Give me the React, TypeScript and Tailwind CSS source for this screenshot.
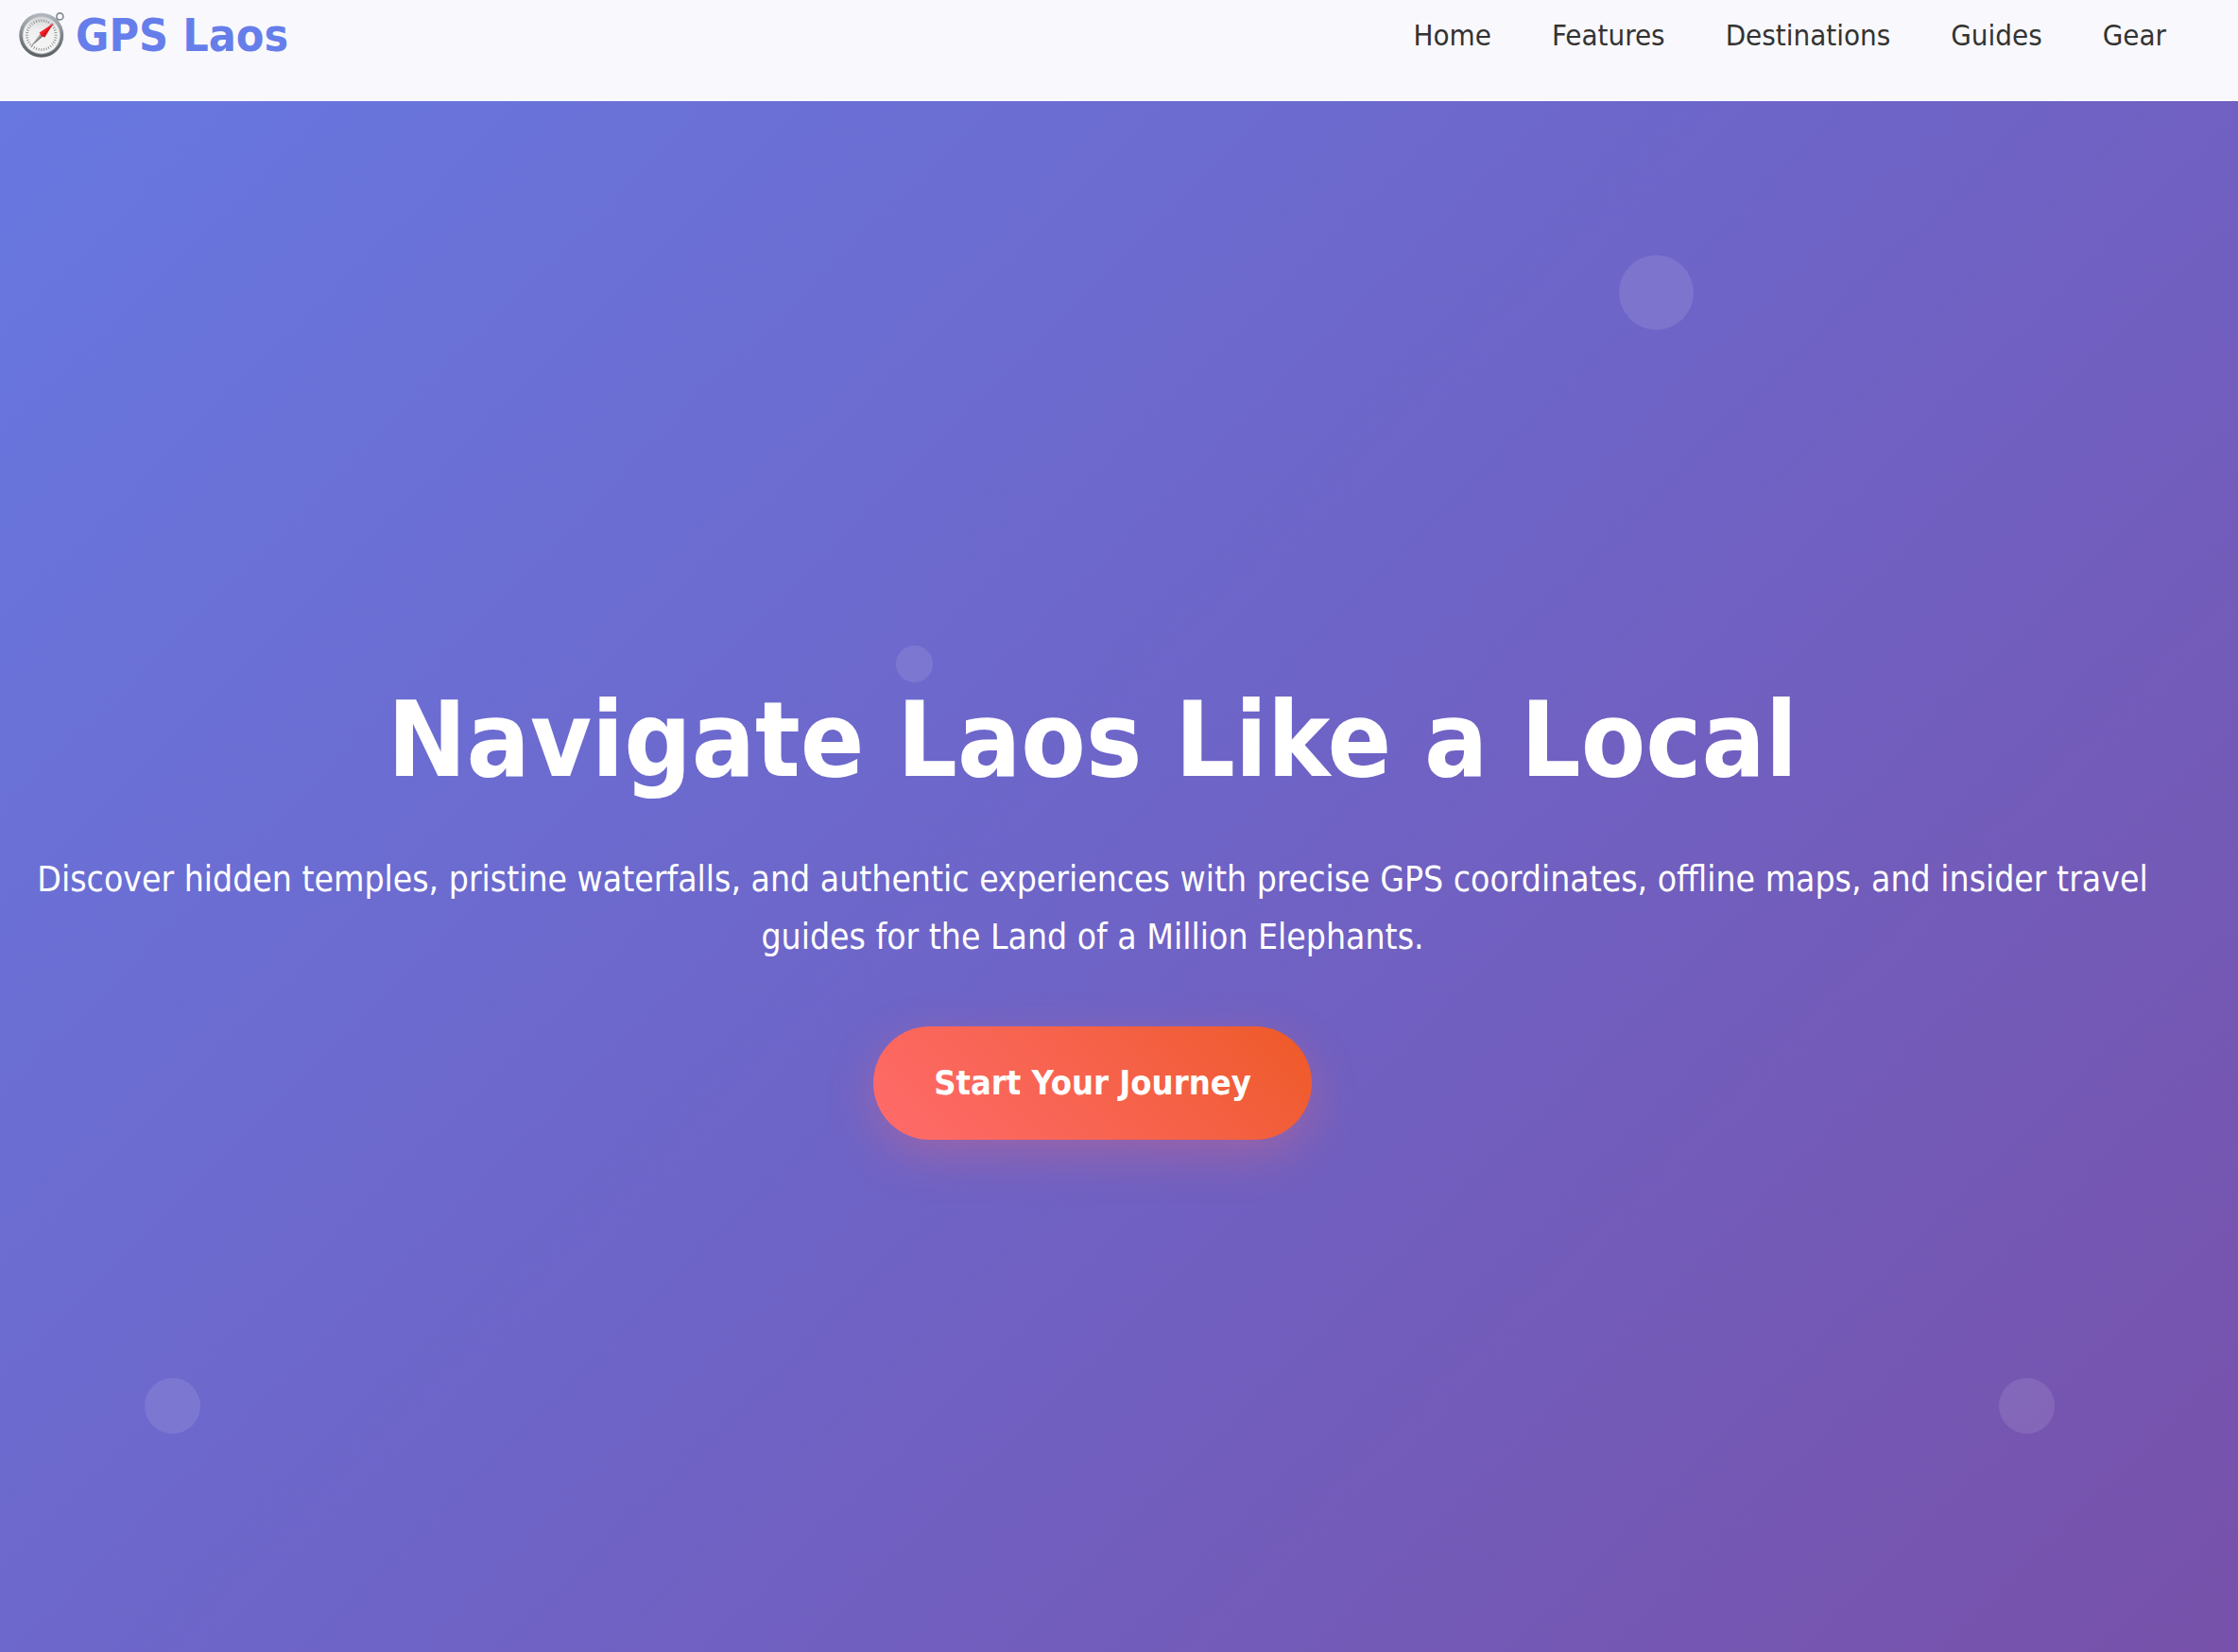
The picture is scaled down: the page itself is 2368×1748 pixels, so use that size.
const links = ['Home', 'Features', 'Destinations', 'Guides', 'Gear'];

const ticks = Array.from({ length: 36 }, (_, i) => i * 10);

function Compass() {
  return (
    <svg viewBox="0 0 48 48" className="size-12 shrink-0" aria-hidden="true">
      <defs>
        <linearGradient id="rim" x1="0" y1="0" x2="0" y2="1">
          <stop offset="0" stopColor="#b4bac0" />
          <stop offset="0.5" stopColor="#7f868c" />
          <stop offset="1" stopColor="#5a5e62" />
        </linearGradient>
        <linearGradient id="face" x1="0" y1="0" x2="0" y2="1">
          <stop offset="0" stopColor="#d2d4d6" />
          <stop offset="0.35" stopColor="#efefef" />
          <stop offset="1" stopColor="#f6f6f6" />
        </linearGradient>
      </defs>
      <circle cx="43.4" cy="4.4" r="3.5" fill="none" stroke="#868c92" strokeWidth="1.7" />
      <path d="M38.3 9.7 41 7" stroke="#7c8288" strokeWidth="3" />
      <circle cx="23.8" cy="24.2" r="23.5" fill="url(#rim)" />
      <circle cx="23.8" cy="24.2" r="20.2" fill="#b5b9bd" />
      <circle cx="23.8" cy="24.2" r="19.4" fill="url(#face)" />
      {ticks.map((a) => (
        <path key={a} d="M23.8 7.4v2.8" stroke="#8a8d90" strokeWidth="0.9" transform={`rotate(${a} 23.8 24.2)`} />
      ))}
      <path d="M11.8 37 22.6 22.8 25.4 25.6Z" fill="#a3a3a3" />
      <path d="M11.8 37 24 24.2 25.4 25.6Z" fill="#7d7d7d" />
      <path d="M36.6 11.6 21.6 21.6 23.4 24.6 27.2 26.4Z" fill="#f2252a" />
      <path d="M36.6 11.6 23.4 24.6 27.2 26.4Z" fill="#dd141c" />
    </svg>
  );
}

export default function App() {
  return (
    <div className="flex min-h-screen flex-col font-['DejaVu_Sans_Condensed','DejaVu_Sans',sans-serif]">
      <header className="flex items-center justify-between bg-[#f9f9fd] pr-[76px] pb-[33px] pl-5">
        <a href="#home" className="flex items-center gap-3 text-[48px] leading-[74px] font-bold text-[#667eea]">
          <Compass />
          GPS Laos
        </a>
        <nav className="flex gap-16 text-[31px] leading-[74px] text-[#333]">
          {links.map((label) => (
            <a key={label} href={`#${label.toLowerCase()}`}>
              {label}
            </a>
          ))}
        </nav>
      </header>

      <main className="relative flex grow flex-col items-center justify-center bg-linear-135 from-[#6778e0] via-[#6e64c7] to-[#7751aa] pt-[66px] pr-[86px] pl-[30px] text-center text-white">
        <div className="pointer-events-none absolute inset-0" aria-hidden="true">
          <span className="absolute top-[163px] left-[1713px] size-[79px] rounded-full bg-white/10" />
          <span className="absolute top-[576px] left-[948px] size-[39px] rounded-full bg-white/10" />
          <span className="absolute top-[1351px] left-[153px] size-[59px] rounded-full bg-white/10" />
          <span className="absolute top-[1351px] left-[2115px] size-[59px] rounded-full bg-white/10" />
        </div>
        <h1 className="relative text-[111px] leading-[134px] font-bold">Navigate Laos Like a Local</h1>
        <p className="relative mt-[50px] text-[37px] leading-[61px]">
          Discover hidden temples, pristine waterfalls, and authentic experiences with precise GPS coordinates, offline maps, and insider travel
          guides for the Land of a Million Elephants.
        </p>
        <button
          type="button"
          className="relative mt-16 h-[120px] rounded-full bg-linear-45 from-[#ff6b6b] to-[#ee5a24] px-16 text-[36px] font-bold shadow-[0_16px_50px_rgba(255,107,107,0.3)]"
        >
          Start Your Journey
        </button>
      </main>
    </div>
  );
}
